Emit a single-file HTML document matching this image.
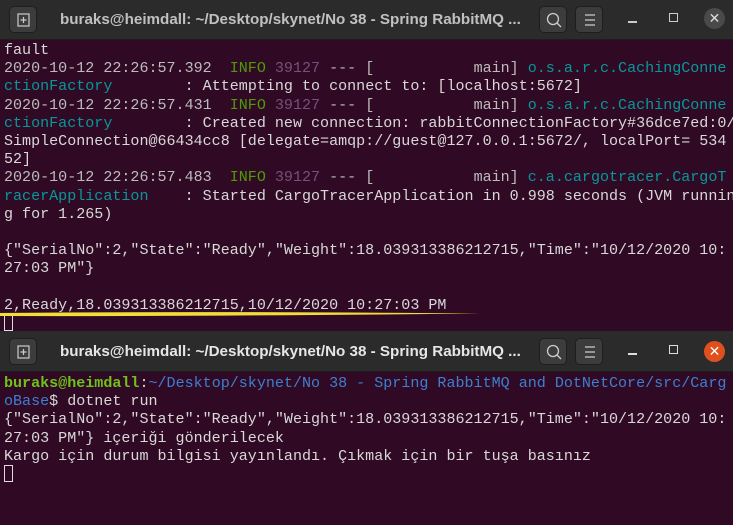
<!DOCTYPE html>
<html><head><meta charset="utf-8"><style>
*{margin:0;padding:0;box-sizing:border-box}
body{width:733px;height:525px;overflow:hidden;background:#300a24;position:relative;font-family:"Liberation Mono",monospace}
.tb{position:absolute;left:0;width:733px;height:40px;background:#2b2b2b;border-bottom:1px solid #1e1e1e}
.btn{position:absolute;width:28px;height:27px;border-radius:5px;background:#3c3c3c;border:1px solid #1e1e1e}
.title{position:absolute;left:60px;top:11px;font:bold 15.2px "Liberation Sans",sans-serif;color:#c0c0c0;white-space:nowrap}
.term{position:absolute;left:4px;font-size:15.05px;line-height:18.2px;color:#d8d8d8;white-space:pre}
.g{color:#4e9a06}.m{color:#75507b}.c{color:#06989a}.d{color:#bcbcbc}
.pg{color:#6ec21a;font-weight:bold}.pb{color:#3d7fd0}
.cur{display:inline-block;width:9px;height:17px;border:1px solid #ddd;vertical-align:top}
</style></head><body>
<div class="tb" style="top:0;height:40px">
 <div class="btn" style="left:9px;top:6px"><svg width="28" height="27"><rect x="8" y="7" width="11" height="12" fill="none" stroke="#ccc" stroke-width="1.2"/><path d="M13.5 10v6M10.5 13h6" stroke="#ccc" stroke-width="1.2"/></svg></div>
 <div class="title">buraks@heimdall: ~/Desktop/skynet/No 38 - Spring RabbitMQ ...</div>
 <div class="btn" style="left:539px;top:6px"><svg width="28" height="27"><circle cx="13" cy="12" r="5.5" fill="none" stroke="#ccc" stroke-width="1.3"/><path d="M17 16l4 4" stroke="#ccc" stroke-width="1.3"/></svg></div>
 <div class="btn" style="left:575px;top:6px"><svg width="28" height="27"><path d="M9 8h10M9 13h10M9 18h10" stroke="#ccc" stroke-width="1.2"/></svg></div>
 <div style="position:absolute;left:628px;top:21px;width:9px;height:1.5px;background:#ccc"></div>
 <div style="position:absolute;left:669px;top:13px;width:9px;height:9px;border:1.3px solid #ccc"></div>
 <div style="position:absolute;left:704px;top:8px;width:21px;height:21px;border-radius:50%;background:#4a4a4a;color:#ddd;font:14px 'Liberation Sans';text-align:center;line-height:21px">✕</div>
</div>
<div class="term" style="top:41px">fault
<span class="d">2020-10-12 22:26:57.392</span>  <span class="g">INFO</span> <span class="m">39127</span> <span class="d">--- [           main]</span> <span class="c">o.s.a.r.c.CachingConne</span>
<span class="c">ctionFactory      </span>  : Attempting to connect to: [localhost:5672]
<span class="d">2020-10-12 22:26:57.431</span>  <span class="g">INFO</span> <span class="m">39127</span> <span class="d">--- [           main]</span> <span class="c">o.s.a.r.c.CachingConne</span>
<span class="c">ctionFactory      </span>  : Created new connection: rabbitConnectionFactory#36dce7ed:0/
SimpleConnection@66434cc8 [delegate=amqp://guest@127.0.0.1:5672/, localPort= 534
52]
<span class="d">2020-10-12 22:26:57.483</span>  <span class="g">INFO</span> <span class="m">39127</span> <span class="d">--- [           main]</span> <span class="c">c.a.cargotracer.CargoT</span>
<span class="c">racerApplication  </span>  : Started CargoTracerApplication in 0.998 seconds (JVM runnin
g for 1.265)

{"SerialNo":2,"State":"Ready","Weight":18.039313386212715,"Time":"10/12/2020 10:
27:03 PM"}

2,Ready,18.039313386212715,10/12/2020 10:27:03 PM
<span class="cur"></span></div>
<svg style="position:absolute;left:0;top:310px" width="500" height="8"><path d="M0 3 Q200 1 480 3.5 Q200 6.5 0 6Z" fill="#f2de3a"/></svg>
<div class="tb" style="top:331px;height:41px">
 <div class="btn" style="left:9px;top:7px"><svg width="28" height="27"><rect x="8" y="7" width="11" height="12" fill="none" stroke="#ccc" stroke-width="1.2"/><path d="M13.5 10v6M10.5 13h6" stroke="#ccc" stroke-width="1.2"/></svg></div>
 <div class="title" style="color:#e6e6e6;top:12px">buraks@heimdall: ~/Desktop/skynet/No 38 - Spring RabbitMQ ...</div>
 <div class="btn" style="left:539px;top:7px"><svg width="28" height="27"><circle cx="13" cy="12" r="5.5" fill="none" stroke="#ccc" stroke-width="1.3"/><path d="M17 16l4 4" stroke="#ccc" stroke-width="1.3"/></svg></div>
 <div class="btn" style="left:575px;top:7px"><svg width="28" height="27"><path d="M9 8h10M9 13h10M9 18h10" stroke="#ccc" stroke-width="1.2"/></svg></div>
 <div style="position:absolute;left:628px;top:22px;width:9px;height:1.5px;background:#ddd"></div>
 <div style="position:absolute;left:669px;top:14px;width:9px;height:9px;border:1.3px solid #ddd"></div>
 <div style="position:absolute;left:704px;top:10px;width:21px;height:21px;border-radius:50%;background:#e0501e;color:#fff;font:14px 'Liberation Sans';text-align:center;line-height:21px">✕</div>
</div>
<div class="term" style="top:374px"><span class="pg">buraks@heimdall</span>:<span class="pb">~/Desktop/skynet/No 38 - Spring RabbitMQ and DotNetCore/src/Carg</span>
<span class="pb">oBase</span>$ dotnet run
{"SerialNo":2,"State":"Ready","Weight":18.039313386212715,"Time":"10/12/2020 10:
27:03 PM"} içeriği gönderilecek
Kargo için durum bilgisi yayınlandı. Çıkmak için bir tuşa basınız
<span class="cur"></span></div>
</body></html>
